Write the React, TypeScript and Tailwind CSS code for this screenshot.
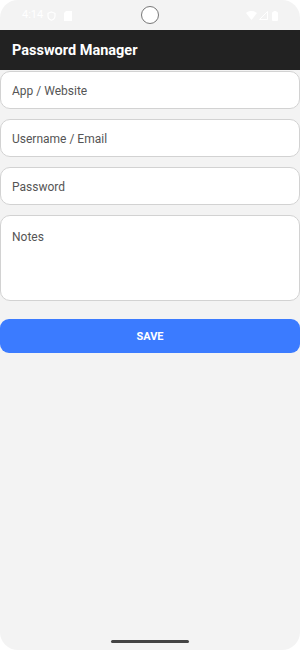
export default function App() {
  const fields = ["App / Website", "Username / Email", "Password"];

  return (
    <div className="h-[650px] w-[300px] overflow-hidden bg-white font-['Roboto',sans-serif]">
      <div className="flex h-full flex-col overflow-hidden rounded-[18px] bg-[#f3f3f3]">
        {/* Status bar */}
        <div className="relative flex h-[30px] shrink-0 items-center justify-between px-[22px] pt-[1px] text-[11px] text-white">
          <div className="flex items-center gap-[4px]">
            <span>4:14</span>
            <svg width="9" height="10" viewBox="0 0 9 10" fill="none" stroke="white" strokeWidth="1.2">
              <path d="M4.5 1 L8 2.3 V5 C8 7.2 6.4 8.6 4.5 9.2 C2.6 8.6 1 7.2 1 5 V2.3 Z" />
            </svg>
            <svg width="8" height="10" viewBox="0 0 8 10" className="ml-[4px]">
              <path d="M2 0 H8 V10 H0 V2 Z" fill="white" />
            </svg>
          </div>
          <div className="absolute left-[141px] top-[6px] h-[18px] w-[18px] rounded-full border border-[#777] bg-white" />
          <div className="flex items-center gap-[2px]">
            <svg width="11" height="9" viewBox="0 0 11 9">
              <path d="M0 2 C3 -0.6 8 -0.6 11 2 L5.5 9 Z" fill="white" />
            </svg>
            <svg width="9" height="9" viewBox="0 0 9 9" fill="none" stroke="white" strokeWidth="1">
              <path d="M8.5 0.5 V8.5 H0.5 Z" />
            </svg>
            <svg width="6" height="10" viewBox="0 0 6 10" className="ml-[2px]">
              <rect x="0" y="1" width="6" height="9" rx="1" fill="white" />
              <rect x="1.5" y="0" width="3" height="2" fill="white" />
            </svg>
          </div>
        </div>

        {/* App bar */}
        <div className="flex h-[40px] shrink-0 items-center bg-[#222222] px-[12px] pt-[2px]">
          <h1 className="text-[14.5px] font-bold text-white">Password Manager</h1>
        </div>

        {/* Form */}
        <div className="flex flex-col pt-[1px]">
          {fields.map((f) => (
            <div
              key={f}
              className="mb-[10px] flex h-[38px] items-center rounded-[10px] border border-[#d2d2d2] bg-white px-[11px] pt-[2px] text-[12px] text-[#555]"
            >
              {f}
            </div>
          ))}
          <div className="h-[86px] rounded-[10px] border border-[#d2d2d2] bg-white px-[11px] pt-[12px] text-[12px] text-[#555]">
            Notes
          </div>
          <button className="mt-[18px] flex h-[34px] items-center justify-center rounded-[9px] bg-[#3b7bff] pt-[2px] text-[11px] font-bold text-white">
            SAVE
          </button>
        </div>

        <div className="flex-1" />
        <div className="flex h-[10px] shrink-0 justify-center">
          <div className="h-[3px] w-[78px] rounded-full bg-[#444]" />
        </div>
      </div>
    </div>
  );
}
